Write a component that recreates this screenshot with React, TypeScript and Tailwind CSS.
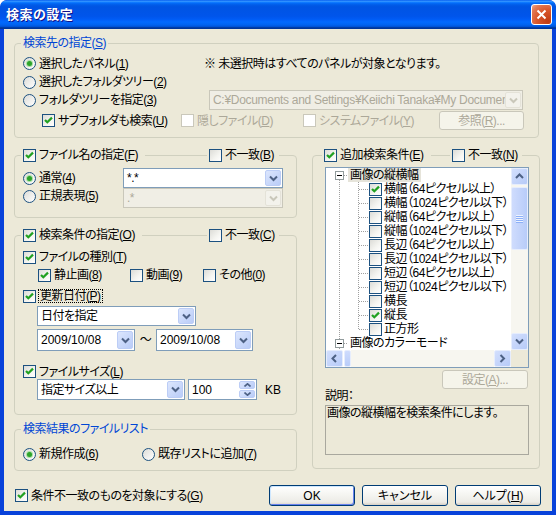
import React from 'react';

type Kids = { children?: React.ReactNode; className?: string };

const dot = { stroke: '#A0A0A0', strokeDasharray: '1 1', shapeRendering: 'crispEdges' as const };

function CheckBox({ checked = false, disabled = false }: { checked?: boolean; disabled?: boolean }) {
  return (
    <span
      className={`flex h-[13px] w-[13px] shrink-0 items-center justify-center border ${
        disabled
          ? 'border-[#CAC8BB] bg-white'
          : 'border-[#1C5180] bg-[linear-gradient(135deg,#DCDCD7_0%,#F5F5F1_60%,#FFFFFF_100%)]'
      }`}
    >
      {checked && (
        <svg width="11" height="11" viewBox="0 0 11 11">
          <path d="M2 5 L4.3 7.3 L9 2.6" fill="none" stroke="#21A121" strokeWidth="2.2" />
        </svg>
      )}
    </span>
  );
}

function Radio({ checked = false }: { checked?: boolean }) {
  return (
    <span className="flex h-[13px] w-[13px] shrink-0 items-center justify-center rounded-full border border-[#1C5180] bg-[linear-gradient(135deg,#DCDCD7,#FFFFFF)]">
      {checked && <span className="h-[5px] w-[5px] rounded-full bg-[#2DA32B] shadow-[0_0_0_1px_#A8E0A6]" />}
    </span>
  );
}

function Chevron({ dir = 'down', disabled = false }: { dir?: 'down' | 'up' | 'left' | 'right'; disabled?: boolean }) {
  const d =
    dir === 'down'
      ? 'M1 1.5 L4.5 5 L8 1.5'
      : dir === 'up'
      ? 'M1 5 L4.5 1.5 L8 5'
      : dir === 'left'
      ? 'M5 1 L1.5 4.5 L5 8'
      : 'M1.5 1 L5 4.5 L1.5 8';
  const vert = dir === 'down' || dir === 'up';
  return (
    <svg width={vert ? 9 : 7} height={vert ? 7 : 9} viewBox={vert ? '0 0 9 7' : '0 0 7 9'}>
      <path d={d} fill="none" stroke={disabled ? '#C9C7BA' : '#4D6185'} strokeWidth="2" />
    </svg>
  );
}

function DropBtn({ disabled = false }: { disabled?: boolean }) {
  return (
    <span
      className={`flex w-[16px] shrink-0 items-center justify-center rounded-[2px] border ${
        disabled
          ? 'border-[#E4E2D8] bg-[#F3F2EC]'
          : 'border-[#BCCDF6] bg-[linear-gradient(135deg,#DCE6FD,#B9CCF8)]'
      }`}
    >
      <Chevron disabled={disabled} />
    </span>
  );
}

function Combo({ value, className, disabled = false }: { value: string; className?: string; disabled?: boolean }) {
  return (
    <div
      className={`flex items-stretch border p-[1px] ${
        disabled ? 'border-[#C9C7BA] bg-[#F0EEE5] text-[#ACA899]' : 'border-[#7F9DB9] bg-white'
      } ${className ?? ''}`}
    >
      <span className="flex flex-1 items-center overflow-hidden whitespace-nowrap pl-[2px]">{value}</span>
      <DropBtn disabled={disabled} />
    </div>
  );
}

function Btn({ children, className, disabled = false, def = false }: Kids & { disabled?: boolean; def?: boolean }) {
  return (
    <button
      type="button"
      className={`flex items-center justify-center rounded-[3px] border ${
        disabled
          ? 'border-[#C9C7BA] bg-[#F5F4EA] text-[#ACA899]'
          : 'border-[#003C74] bg-[linear-gradient(180deg,#FFFFFF_0%,#F4F4F0_50%,#ECEBE6_85%,#D6D0C5_100%)]'
      } ${def ? 'shadow-[inset_1px_1px_#CEE7FF,inset_-1px_-1px_#6982EE]' : ''} ${className ?? ''}`}
    >
      {children}
    </button>
  );
}

function ScrollBtn({ dir }: { dir: 'down' | 'up' | 'left' | 'right' }) {
  return (
    <span className="flex h-[17px] w-[17px] shrink-0 items-center justify-center rounded-[2px] border border-[#E6EDFD] bg-[linear-gradient(135deg,#D3DFFD,#B7CBF8)]">
      <Chevron dir={dir} />
    </span>
  );
}

function TreeRoot({ label, first = false, selected = false }: { label: string; first?: boolean; selected?: boolean }) {
  return (
    <div className="flex h-[14px] shrink-0 items-center">
      <svg width="22" height="14" className="shrink-0">
        {!first && <line x1="13.5" y1="0" x2="13.5" y2="3" {...dot} />}
        <line x1="13.5" y1="12" x2="13.5" y2="14" {...dot} />
        <rect x="9.5" y="3.5" width="8" height="8" fill="white" stroke="#919B9C" shapeRendering="crispEdges" />
        <line x1="11" y1="7.5" x2="16" y2="7.5" stroke="#000" shapeRendering="crispEdges" />
        <line x1="18" y1="7.5" x2="22" y2="7.5" {...dot} />
      </svg>
      <span className={`px-[2px] leading-[14px] ${selected ? 'bg-[#E6E4DA]' : ''}`}>{label}</span>
    </div>
  );
}

function TreeChild({ label, checked = false, last = false }: { label: string; checked?: boolean; last?: boolean }) {
  return (
    <div className="flex h-[14px] shrink-0 items-center">
      <svg width="43" height="14" className="shrink-0">
        <line x1="13.5" y1="0" x2="13.5" y2="14" {...dot} />
        <line x1="32.5" y1="0" x2="32.5" y2={last ? 8 : 14} {...dot} />
        <line x1="33" y1="7.5" x2="43" y2="7.5" {...dot} />
      </svg>
      <CheckBox checked={checked} />
      <span className="ml-[2px] leading-[14px]">{label}</span>
    </div>
  );
}

const treeItems: [string, boolean][] = [
  ['横幅（64ピクセル以上）', true],
  ['横幅（1024ピクセル以下）', false],
  ['縦幅（64ピクセル以上）', false],
  ['縦幅（1024ピクセル以下）', false],
  ['長辺（64ピクセル以上）', false],
  ['長辺（1024ピクセル以下）', false],
  ['短辺（64ピクセル以上）', false],
  ['短辺（1024ピクセル以下）', false],
  ['横長', false],
  ['縦長', true],
  ['正方形', false],
];

function TitleBar() {
  return (
    <div className="flex h-[29px] shrink-0 items-center justify-between rounded-t-[7px] bg-[linear-gradient(180deg,#0058EE_0%,#3593FF_4%,#288EFF_6%,#127DFF_8%,#036FFC_10%,#0262EE_14%,#0057E5_20%,#0054E3_24%,#0055EB_56%,#005BF5_66%,#026AFE_76%,#0062EF_86%,#0052D6_92%,#0040AB_94%,#003092_100%)] pl-[6px] pr-[4px]">
      <span className="text-[13px] font-bold tracking-[0.5px] text-white [text-shadow:1px_1px_#0F1089]">検索の設定</span>
      <span className="flex h-[21px] w-[21px] items-center justify-center rounded-[3px] border border-white bg-[radial-gradient(circle_at_85%_85%,#C13B12_0%,#D9572C_50%,#E27A55_80%,#F0A98C_100%)]">
        <svg width="11" height="11" viewBox="0 0 11 11">
          <path d="M1.5 1.5 L9.5 9.5 M9.5 1.5 L1.5 9.5" stroke="white" strokeWidth="2" />
        </svg>
      </span>
    </div>
  );
}

export default function App() {
  return (
    <div className="flex h-[515px] w-[556px] flex-col overflow-hidden rounded-t-[7px] bg-[#0842DA] font-['Liberation_Sans','Noto_Sans_CJK_JP',sans-serif] text-[12px] leading-[14px] tracking-[-0.5px] text-black [font-feature-settings:'palt']">
      <TitleBar />
      <div className="mx-[4px] mb-[4px] flex flex-1 flex-col bg-[#ECE9D8] pl-[10px]">
        {/* 検索先の指定 */}
        <fieldset className="mt-[6px] h-[103px] w-[525px] rounded-[4px] border border-[#D0D0BF] pl-[8px]">
          <legend className="-ml-[2px] px-[2px] leading-[16px] text-[#0046D5]">
            検索先の指定(<u>S</u>)
          </legend>
          <div className="mt-[3px] flex h-[19px] items-center">
            <div className="flex w-[181px] items-center gap-[3px]">
              <Radio checked />
              <span>
                選択したパネル(<u>1</u>)
              </span>
            </div>
            <span>※ 未選択時はすべてのパネルが対象となります。</span>
          </div>
          <div className="flex h-[18px] items-center gap-[3px]">
            <Radio />
            <span>
              選択したフォルダツリー(<u>2</u>)
            </span>
          </div>
          <div className="flex h-[18px] items-center">
            <div className="flex w-[186px] items-center gap-[3px]">
              <Radio />
              <span>
                フォルダツリーを指定(<u>3</u>)
              </span>
            </div>
            <Combo
              className="h-[20px] w-[314px] tracking-[-0.3px]"
              disabled
              value="C:¥Documents and Settings¥Keiichi Tanaka¥My Documents"
            />
          </div>
          <div className="mt-[2px] flex h-[19px] items-center pl-[19px]">
            <div className="flex w-[139px] items-center gap-[3px]">
              <CheckBox checked />
              <span>
                サブフォルダも検索(<u>U</u>)
              </span>
            </div>
            <div className="flex w-[122px] items-center gap-[3px] text-[#ACA899]">
              <CheckBox disabled />
              <span>
                隠しファイル(<u>D</u>)
              </span>
            </div>
            <div className="flex w-[136px] items-center gap-[3px] text-[#ACA899]">
              <CheckBox disabled />
              <span>
                システムファイル(<u>Y</u>)
              </span>
            </div>
            <Btn disabled className="h-[19px] w-[85px]">
              参照(<u>R</u>)...
            </Btn>
          </div>
        </fieldset>

        <div className="mt-[9px] flex gap-[15px]">
          <div className="flex w-[283px] flex-col">
            {/* ファイル名の指定 */}
            <fieldset className="h-[71px] w-[283px] rounded-[4px] border border-[#D0D0BF] pl-[8px]">
              <legend className="-ml-[2px] whitespace-nowrap px-[2px]">
                <div className="flex h-[16px] w-[254px] items-center">
                  <div className="flex w-[186px] items-center gap-[3px]">
                    <CheckBox checked />
                    <span>
                      ファイル名の指定(<u>F</u>)
                    </span>
                    <span className="ml-[4px] mr-[2px] h-px flex-1 bg-[#D0D0BF]" />
                  </div>
                  <div className="flex items-center gap-[3px]">
                    <CheckBox />
                    <span>
                      不一致(<u>B</u>)
                    </span>
                  </div>
                </div>
              </legend>
              <div className="mt-[5px] flex h-[20px] items-center">
                <div className="flex w-[100px] items-center gap-[3px]">
                  <Radio checked />
                  <span>
                    通常(<u>4</u>)
                  </span>
                </div>
                <Combo className="h-[20px] w-[160px]" value="*.*" />
              </div>
              <div className="flex h-[20px] items-center">
                <div className="flex w-[100px] items-center gap-[3px] pb-[4px]">
                  <Radio />
                  <span>
                    正規表現(<u>5</u>)
                  </span>
                </div>
                <Combo className="h-[20px] w-[160px]" disabled value=".*" />
              </div>
            </fieldset>

            {/* 検索条件の指定 */}
            <fieldset className="mt-[9px] h-[188px] w-[283px] rounded-[4px] border border-[#D0D0BF] pl-[8px]">
              <legend className="-ml-[2px] whitespace-nowrap px-[2px]">
                <div className="flex h-[16px] w-[254px] items-center">
                  <div className="flex w-[186px] items-center gap-[3px]">
                    <CheckBox checked />
                    <span>
                      検索条件の指定(<u>O</u>)
                    </span>
                    <span className="ml-[4px] mr-[2px] h-px flex-1 bg-[#D0D0BF]" />
                  </div>
                  <div className="flex items-center gap-[3px]">
                    <CheckBox />
                    <span>
                      不一致(<u>C</u>)
                    </span>
                  </div>
                </div>
              </legend>
              <div className="mt-[6px] flex h-[16px] items-center gap-[3px]">
                <CheckBox checked />
                <span>
                  ファイルの種別(<u>T</u>)
                </span>
              </div>
              <div className="mt-[2px] flex h-[16px] items-center pl-[15px]">
                <div className="flex w-[92px] items-center gap-[3px]">
                  <CheckBox checked />
                  <span>
                    静止画(<u>8</u>)
                  </span>
                </div>
                <div className="flex w-[73px] items-center gap-[3px]">
                  <CheckBox />
                  <span>
                    動画(<u>9</u>)
                  </span>
                </div>
                <div className="flex items-center gap-[3px]">
                  <CheckBox />
                  <span>
                    その他(<u>0</u>)
                  </span>
                </div>
              </div>
              <div className="mt-[5px] flex h-[16px] items-center gap-[2px]">
                <CheckBox checked />
                <span className="border border-dotted border-black px-[1px] leading-[12px]">
                  更新日付(<u>P</u>)
                </span>
              </div>
              <div className="mt-[2px] pl-[14px]">
                <Combo className="h-[20px] w-[159px]" value="日付を指定" />
              </div>
              <div className="mt-[3px] flex h-[22px] items-center pl-[14px]">
                <Combo className="h-[22px] w-[98px] tracking-normal" value="2009/10/08" />
                <span className="flex w-[21px] justify-center">～</span>
                <Combo className="h-[22px] w-[97px] tracking-normal" value="2009/10/08" />
              </div>
              <div className="mt-[13px] flex h-[15px] items-center gap-[3px]">
                <CheckBox checked />
                <span>
                  ファイルサイズ(<u>L</u>)
                </span>
              </div>
              <div className="flex h-[21px] items-center pl-[14px]">
                <Combo className="h-[21px] w-[148px]" value="指定サイズ以上" />
                <div className="ml-[3px] flex h-[21px] w-[69px] items-stretch border border-[#7F9DB9] bg-white p-[1px]">
                  <span className="flex flex-1 items-center pl-[2px] tracking-normal">100</span>
                  <div className="flex w-[16px] flex-col gap-[1px]">
                    <span className="flex flex-1 items-center justify-center rounded-[2px] border border-[#BCCDF6] bg-[linear-gradient(135deg,#DCE6FD,#B9CCF8)]">
                      <svg width="7" height="4" viewBox="0 0 7 4">
                        <path d="M0.5 3.5 L3.5 0.8 L6.5 3.5" fill="none" stroke="#4D6185" strokeWidth="1.6" />
                      </svg>
                    </span>
                    <span className="flex flex-1 items-center justify-center rounded-[2px] border border-[#BCCDF6] bg-[linear-gradient(135deg,#DCE6FD,#B9CCF8)]">
                      <svg width="7" height="4" viewBox="0 0 7 4">
                        <path d="M0.5 0.5 L3.5 3.2 L6.5 0.5" fill="none" stroke="#4D6185" strokeWidth="1.6" />
                      </svg>
                    </span>
                  </div>
                </div>
                <span className="ml-[8px] tracking-normal">KB</span>
              </div>
            </fieldset>

            {/* 検索結果のファイルリスト */}
            <fieldset className="mt-[6px] h-[50px] w-[283px] rounded-[4px] border border-[#D0D0BF] pl-[8px]">
              <legend className="-ml-[2px] px-[2px] leading-[16px] text-[#0046D5]">検索結果のファイルリスト</legend>
              <div className="mt-[9px] flex h-[16px] items-center">
                <div className="flex w-[119px] items-center gap-[3px]">
                  <Radio checked />
                  <span>
                    新規作成(<u>6</u>)
                  </span>
                </div>
                <div className="flex items-center gap-[3px]">
                  <Radio />
                  <span>
                    既存リストに追加(<u>7</u>)
                  </span>
                </div>
              </div>
            </fieldset>
          </div>

          {/* 追加検索条件 */}
          <fieldset className="h-[322px] w-[228px] rounded-[4px] border border-[#D0D0BF] pl-[12px]">
            <legend className="-ml-[3px] whitespace-nowrap px-[2px]">
              <div className="flex h-[16px] w-[196px] items-center">
                <div className="flex w-[128px] items-center gap-[3px]">
                  <CheckBox checked />
                  <span>
                    追加検索条件(<u>E</u>)
                  </span>
                  <span className="ml-[4px] mr-[2px] h-px flex-1 bg-[#D0D0BF]" />
                </div>
                <div className="flex shrink-0 items-center gap-[3px]">
                  <CheckBox />
                  <span>
                    不一致(<u>N</u>)
                  </span>
                </div>
              </div>
            </legend>
            <div className="mt-[4px] flex h-[201px] w-[204px] flex-col border border-[#7F9DB9] bg-white">
              <div className="flex h-[182px]">
                <div className="flex flex-1 flex-col overflow-hidden whitespace-nowrap">
                  <TreeRoot label="画像の縦横幅" first selected />
                  {treeItems.map(([label, checked], i) => (
                    <TreeChild key={label} label={label} checked={checked} last={i === treeItems.length - 1} />
                  ))}
                  <TreeRoot label="画像のカラーモード" />
                </div>
                <div className="flex w-[17px] flex-col bg-[#F7F6F0]">
                  <ScrollBtn dir="up" />
                  <span className="mt-[2px] flex h-[63px] items-center justify-center rounded-[2px] border border-[#E6EDFD] bg-[linear-gradient(90deg,#CFDCFD,#B8CCF9)]">
                    <svg width="7" height="8" viewBox="0 0 7 8">
                      <path d="M0 0.5 H7 M0 2.5 H7 M0 4.5 H7 M0 6.5 H7" stroke="#EEF3FE" />
                      <path d="M0 1.5 H7 M0 3.5 H7 M0 5.5 H7 M0 7.5 H7" stroke="#8CB0F8" />
                    </svg>
                  </span>
                  <span className="flex-1" />
                  <ScrollBtn dir="down" />
                </div>
              </div>
              <div className="flex h-[17px]">
                <ScrollBtn dir="left" />
                <span className="ml-px w-[7px] rounded-[2px] border border-[#E6EDFD] bg-[linear-gradient(180deg,#CFDCFD,#B8CCF9)]" />
                <span className="flex-1 bg-[#F7F6F0]" />
                <ScrollBtn dir="right" />
                <span className="w-[17px] bg-[#ECE9D8]" />
              </div>
            </div>
            <div className="mt-[2px] flex justify-end pr-[11px]">
              <Btn disabled className="h-[19px] w-[86px]">
                設定(<u>A</u>)...
              </Btn>
            </div>
            <div className="h-[14px]">説明：</div>
            <div className="mt-[2px] h-[50px] w-[204px] border border-[#A9A89E] px-[1px]">
              画像の縦横幅を検索条件にします。
            </div>
          </fieldset>
        </div>

        <div className="mt-[14px] flex h-[21px] items-center justify-between pl-[1px] pr-[11px]">
          <div className="flex items-center gap-[3px]">
            <CheckBox checked />
            <span>
              条件不一致のものを対象にする(<u>G</u>)
            </span>
          </div>
          <div className="flex gap-[7px] tracking-normal">
            <Btn def className="h-[21px] w-[86px]">
              OK
            </Btn>
            <Btn className="h-[21px] w-[86px]">キャンセル</Btn>
            <Btn className="h-[21px] w-[86px]">
              ヘルプ(<u>H</u>)
            </Btn>
          </div>
        </div>
      </div>
    </div>
  );
}
